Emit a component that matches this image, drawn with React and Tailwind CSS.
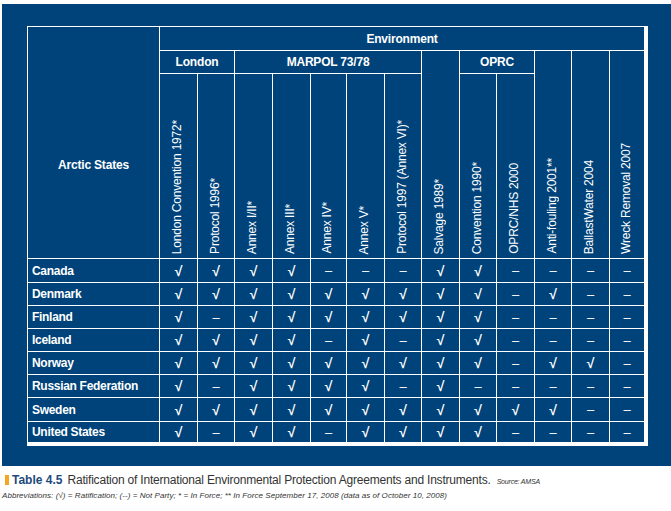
import React from 'react';

const Y = '√';
const N = '–';

// column headers (rotated)
const cols = [
  'London Convention 1972*',
  'Protocol 1996*',
  'Annex I/II*',
  'Annex III*',
  'Annex IV*',
  'Annex V*',
  'Protocol 1997 (Annex VI)*',
  'Salvage 1989*',
  'Convention 1990*',
  'OPRC/NHS 2000',
  'Anti-fouling 2001**',
  'BallastWater 2004',
  'Wreck Removal 2007',
];

const widths = [132, 38, 37, 38, 38, 36, 38, 37, 38, 37, 38, 37, 38, 35];

const rows = [
  ['Canada', 'YYYYNNNYYNNNN', 24],
  ['Denmark', 'YYYYYYYYYNYNN', 23],
  ['Finland', 'YNYYYYYYYNNNN', 23],
  ['Iceland', 'YYYYNYNYYNNNN', 23],
  ['Norway', 'YYYYYYYYYNYYN', 23],
  ['Russian Federation', 'YNYYYYNYNNNNN', 23],
  ['Sweden', 'YYYYYYYYYYYNN', 24],
  ['United States', 'YNYYNYYYYNNNN', 21],
];

const cell = 'border border-white p-0 leading-none';

const Rot = ({ children }) => (
  <div className="flex justify-center pr-[3px]">
    <span className="block [writing-mode:vertical-rl] rotate-180 whitespace-nowrap text-[12px] leading-[14px] tracking-[-0.2px]">
      {children}
    </span>
  </div>
);

export default function App() {
  return (
    <div className="w-[671px] h-[511px] bg-white overflow-hidden" style={{ fontFamily: '"Liberation Sans", Arial, sans-serif' }}>
      <div className="mt-[4px] ml-[2px] h-[462px] bg-[#00437a] pl-[25px] pt-[22px]">
        <div className="inline-block bg-white pr-[3px] pb-[3px]">
          <table className="table-fixed border-collapse text-white bg-[#00437a]">
            <colgroup>
              {widths.map((w, i) => (
                <col key={i} style={{ width: w }} />
              ))}
            </colgroup>
            <thead>
              <tr>
                <th rowSpan={3} className={`${cell} pt-[44px] text-[12px] font-bold tracking-[-0.2px]`}>Arctic States</th>
                <th colSpan={13} className={`${cell} h-[24px] text-[12px] font-bold tracking-[-0.2px]`}>Environment</th>
              </tr>
              <tr>
                <th colSpan={2} className={`${cell} h-[23px] text-[12px] font-bold tracking-[-0.2px]`}>London</th>
                <th colSpan={5} className={`${cell} text-[12px] font-bold tracking-[-0.2px]`}>MARPOL 73/78</th>
                <th rowSpan={2} className={`${cell} align-bottom pb-[4px] font-normal`}><Rot>{cols[7]}</Rot></th>
                <th colSpan={2} className={`${cell} text-[12px] font-bold tracking-[-0.2px]`}>OPRC</th>
                <th rowSpan={2} className={`${cell} align-bottom pb-[4px] font-normal`}><Rot>{cols[10]}</Rot></th>
                <th rowSpan={2} className={`${cell} align-bottom pb-[4px] font-normal`}><Rot>{cols[11]}</Rot></th>
                <th rowSpan={2} className={`${cell} align-bottom pb-[4px] font-normal`}><Rot>{cols[12]}</Rot></th>
              </tr>
              <tr>
                {[0, 1, 2, 3, 4, 5, 6, 8, 9].map((i) => (
                  <th key={i} className={`${cell} h-[185px] align-bottom pb-[4px] font-normal`}>
                    <Rot>{cols[i]}</Rot>
                  </th>
                ))}
              </tr>
            </thead>
            <tbody>
              {rows.map(([name, vals, h]) => (
                <tr key={name}>
                  <td className={`${cell} pl-[4px] text-[12px] font-bold tracking-[-0.3px]`} style={{ height: h }}>
                    {name}
                  </td>
                  {vals.split('').map((v, i) => (
                    <td key={i} className={`${cell} text-center text-[12px]`}>
                      {v === 'Y' ? (
                        <span className="text-[14px] font-bold leading-none">{Y}</span>
                      ) : (
                        <span className="text-[13px] leading-none">{N}</span>
                      )}
                    </td>
                  ))}
                </tr>
              ))}
            </tbody>
          </table>
        </div>
      </div>

      <div className="pl-[5px] pt-[5px] flex items-baseline text-[#333]">
        <span className="inline-block w-[4px] h-[10px] bg-[#f5a623] mr-[3px] self-center"></span>
        <span className="text-[12px] font-bold text-[#1c4a7c] mr-[5px]">Table 4.5</span>
        <span className="text-[12px] tracking-[-0.2px]">
          Ratification of International Environmental Protection Agreements and Instruments.
        </span>
        <span className="ml-[6px] text-[7px] italic tracking-[-0.2px]">Source: AMSA</span>
      </div>
      <div className="pl-[2px] mt-[1px] text-[8px] italic text-[#333] tracking-[0.05px]">
        Abbreviations: (√) = Ratification; (--) = Not Party; * = In Force; ** In Force September 17, 2008 (data as of October 10, 2008)
      </div>
    </div>
  );
}
